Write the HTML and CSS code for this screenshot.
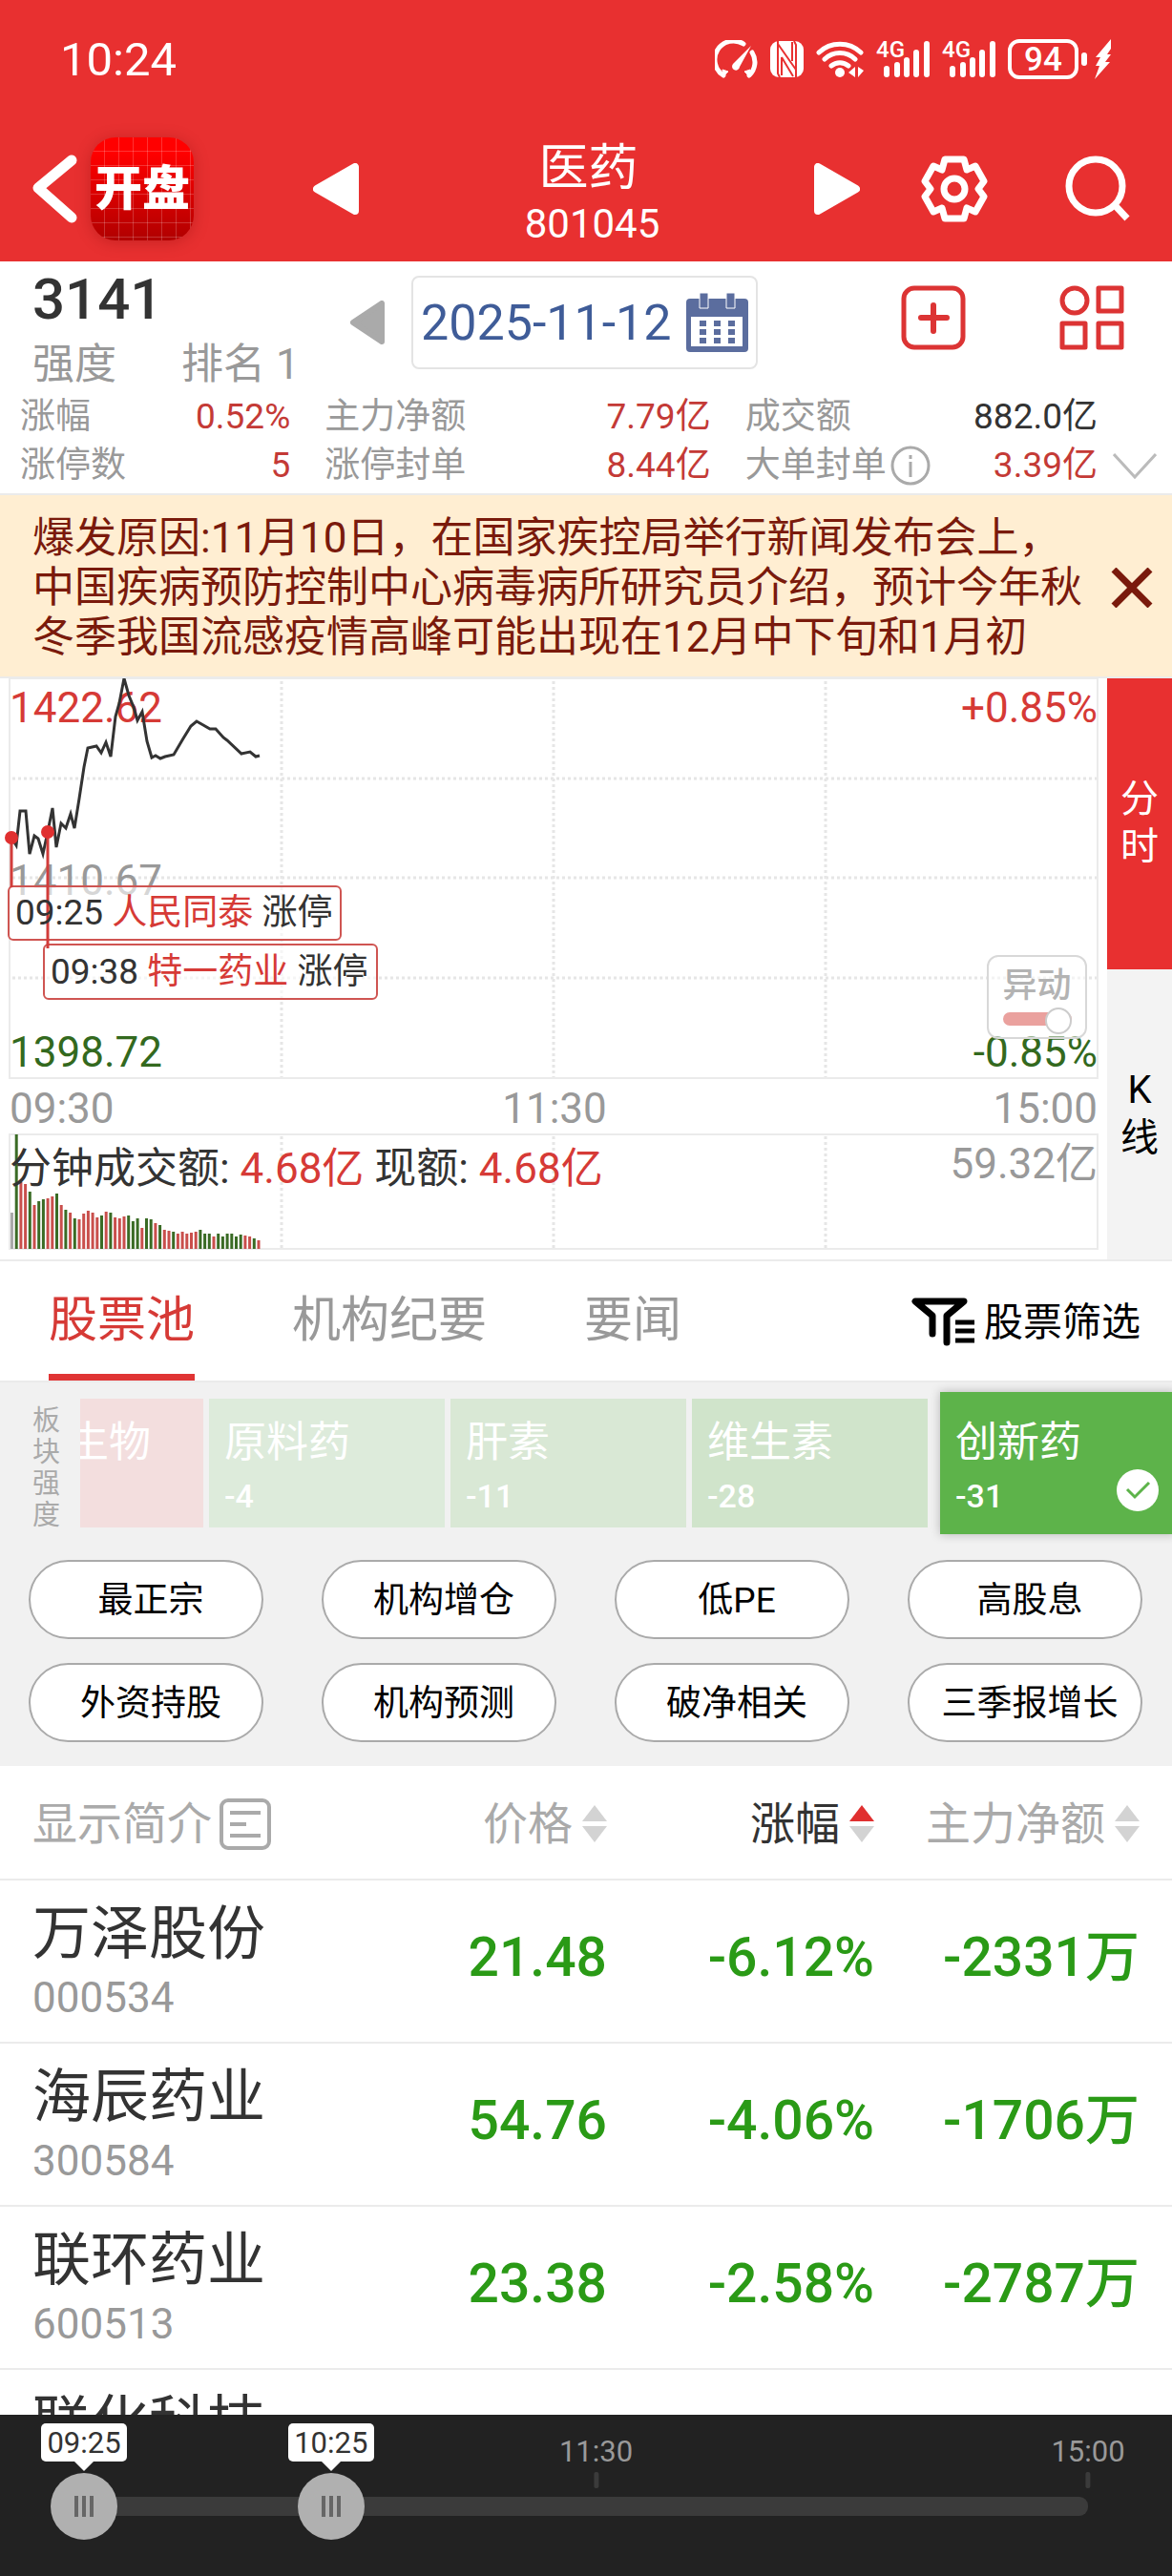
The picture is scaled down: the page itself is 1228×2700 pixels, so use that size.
FILE: index.html
```html
<!DOCTYPE html>
<html lang="zh-CN">
<head>
  <meta charset="UTF-8" />
  <meta name="viewport" content="width=device-width, initial-scale=1.0"/>
  <title>医药 801045</title>
  <link rel="stylesheet" href="styles.css">
</head>
<body>
  <div class="app">
    <header class="header">
      <div class="status-bar">
        <span class="clock">10:24</span>
        <div class="status-icons">
          <svg width="45" height="40" viewBox="0 0 45 40" fill="none" stroke="#fff" stroke-width="5">
            <path d="M9 37A19 19 0 0 1 30 4M39 13A19 19 0 0 1 36 37" stroke-linecap="round"/>
            <path d="M9 38l-1-7 6 2zM36 38l1-7-6 2z" fill="#fff" stroke-width="1"/>
            <path d="M38 6L26 28a4 4 0 1 1-7-3z" fill="#fff" stroke="none"/>
          </svg>
          <svg width="35" height="38" viewBox="0 0 35 38">
            <rect width="35" height="38" rx="9" fill="#fff"/>
            <path d="M8 0v34l2 4M27 38V4l-2-4M8 3l19 27M12 17l12 20M12 17v19M23 21V1" stroke="#e83030" stroke-width="2" fill="none"/>
          </svg>
          <svg width="50" height="40" viewBox="0 0 50 40" fill="none" stroke="#fff" stroke-width="5" stroke-linecap="round">
            <path d="M3 13a32 32 0 0 1 44 0M9 20a23 23 0 0 1 32 0M16 27a14 14 0 0 1 18 0"/>
            <circle cx="25" cy="34" r="5" fill="#fff" stroke="none"/>
            <path d="M41 28v11l-7-5zM44 28v11l6-7z" fill="#fff" stroke="none"/>
          </svg>
          <div class="signal">
            <span>4G</span>
            <svg width="56" height="40" viewBox="0 0 56 40" stroke="#fff" stroke-width="6" stroke-linecap="round">
              <path d="M11 30v6M22 26v10M32 21v15M42 13v23M53 4v32"/>
            </svg>
          </div>
          <div class="signal">
            <span>4G</span>
            <svg width="56" height="40" viewBox="0 0 56 40" stroke="#fff" stroke-width="6" stroke-linecap="round">
              <path d="M11 30v6M22 26v10M32 21v15M42 13v23M53 4v32"/>
            </svg>
          </div>
          <div class="power">
            <span class="battery">94</span>
            <span class="battery-nub"></span>
            <svg width="19" height="42" viewBox="0 0 19 42" fill="#fff">
              <path d="M18 0L2 19h5l-5 9h4L1 42l16-18h-5l6-8h-4l4-6z"/>
            </svg>
          </div>
        </div>
      </div>

      <nav class="nav">
        <div class="nav-left">
          <button class="icon-btn" aria-label="返回">
            <svg width="48" height="72" viewBox="0 0 48 72" fill="none" stroke="#fff" stroke-width="11" stroke-linecap="round" stroke-linejoin="round">
              <path d="M41 6L6 35l35 31"/>
            </svg>
          </button>
          <a class="logo" href="#">开盘</a>
          <button class="icon-btn prev" aria-label="上一个">
            <svg width="48" height="54" viewBox="0 0 48 54" fill="#fff" stroke="#fff" stroke-width="8" stroke-linejoin="round">
              <path d="M44 4v46L4 27z"/>
            </svg>
          </button>
        </div>
        <div class="nav-title">
          <h1>医药</h1>
          <span>801045</span>
        </div>
        <div class="nav-right">
          <button class="icon-btn" aria-label="下一个">
            <svg width="48" height="54" viewBox="0 0 48 54" fill="#fff" stroke="#fff" stroke-width="8" stroke-linejoin="round">
              <path d="M4 4v46l40-23z"/>
            </svg>
          </button>
          <button class="icon-btn" aria-label="设置">
            <svg width="70" height="72" viewBox="-35 -36 70 72" fill="none" stroke="#fff" stroke-width="7" stroke-linejoin="round">
              <path d="M-10-31H10L13-20 22-24 31-8 25 0 31 8 22 24 13 20 10 31H-10L-13 20-22 24-31 8-25 0-31-8-22-24-13-20z"/>
              <circle r="11"/>
            </svg>
          </button>
          <button class="icon-btn search" aria-label="搜索">
            <svg width="68" height="70" viewBox="0 0 68 70" fill="none" stroke="#fff" stroke-width="7">
              <circle cx="32" cy="32" r="28"/>
              <path d="M52 52l13 14"/>
            </svg>
          </button>
        </div>
      </nav>
    </header>

    <section class="info">
      <div class="info-top">
        <div class="score">
          <strong>3141</strong>
          <div class="score-sub"><span>强度</span><span>排名 1</span></div>
        </div>
        <button class="icon-btn day-prev" aria-label="前一天">
          <svg width="36" height="46" viewBox="0 0 36 46" fill="#aaa" stroke="#aaa" stroke-width="6" stroke-linejoin="round">
            <path d="M33 3v40L3 23z"/>
          </svg>
        </button>
        <button class="date-box">
          <span>2025-11-12</span>
          <svg width="65" height="62" viewBox="0 0 65 62" fill="#5b6d9e">
            <rect y="6" width="65" height="56" rx="4"/>
            <rect x="5" y="25" width="54" height="31" fill="#fff"/>
            <path d="M14 0h9v16h-9zM42 0h9v16h-9z" stroke="#fff" stroke-width="1"/>
            <path d="M14 29h7v6h-7zM29 29h7v6h-7zM44 29h7v6h-7zM14 38h7v6h-7zM29 38h7v6h-7zM44 38h7v6h-7zM14 47h7v6h-7zM29 47h7v6h-7zM44 47h7v6h-7z"/>
          </svg>
        </button>
        <div class="info-actions">
          <button class="icon-btn" aria-label="添加">
            <svg width="68" height="68" viewBox="0 0 68 68" fill="none" stroke="#dc3434" stroke-width="5">
              <rect x="3" y="3" width="62" height="62" rx="11"/>
              <path d="M34 21v27M21 34h27" stroke-width="6" stroke-linecap="round"/>
            </svg>
          </button>
          <button class="icon-btn" aria-label="更多">
            <svg width="68" height="68" viewBox="0 0 68 68" fill="none" stroke="#dc3434" stroke-width="5" stroke-linejoin="round">
              <circle cx="16" cy="16" r="13"/>
              <path d="M41 3h24v24H41zM3 40h24v25H3zM41 40h24v25H41z"/>
            </svg>
          </button>
        </div>
      </div>
      <div class="metrics">
        <dl>
          <div><dt>涨幅</dt><dd>0.52%</dd></div>
          <div><dt>主力净额</dt><dd>7.79亿</dd></div>
          <div><dt>成交额</dt><dd class="dark">882.0亿</dd></div>
          <div><dt>涨停数</dt><dd>5</dd></div>
          <div><dt>涨停封单</dt><dd>8.44亿</dd></div>
          <div>
            <dt>大单封单
              <svg width="42" height="42" viewBox="0 0 42 42" fill="none" stroke="#aaa" stroke-width="3">
                <circle cx="21" cy="21" r="19"/>
                <path d="M21 17v16M21 10v4"/>
              </svg>
            </dt>
            <dd>3.39亿</dd>
          </div>
        </dl>
        <button class="icon-btn expand" aria-label="展开">
          <svg width="46" height="30" viewBox="0 0 46 30" fill="none" stroke="#bbb" stroke-width="3">
            <path d="M1 3l22 24L45 3"/>
          </svg>
        </button>
      </div>
    </section>

    <section class="notice">
      <p>爆发原因:11月10日，在国家疾控局举行新闻发布会上，<br>中国疾病预防控制中心病毒病所研究员介绍，预计今年秋<br>冬季我国流感疫情高峰可能出现在12月中下旬和1月初</p>
      <button class="icon-btn" aria-label="关闭">
        <svg width="44" height="42" viewBox="0 0 44 42" stroke="#7a1a0c" stroke-width="7">
          <path d="M3 2l38 38M41 2L3 40"/>
        </svg>
      </button>
    </section>

    <section class="quote">
      <div class="chart">
        <svg class="chart-svg" viewBox="0 0 1160 609">
          <g class="grid">
            <path d="M13 105H1149M13 209H1149M13 314H1149M295 3V418M580 3V418M865 3V418M295 480V597M580 480V597M865 480V597"/>
          </g>
          <g class="frame">
            <rect x="10" y="0" width="1140" height="419"/>
            <rect x="10" y="478" width="1140" height="120"/>
          </g>
          <g id="volumeBars"></g>
          <text class="axis up" x="10" y="46">1422.62</text>
          <text class="axis" x="10" y="227">1410.67</text>
          <text class="axis down" x="10" y="407">1398.72</text>
          <text class="axis up" x="1150" y="46" text-anchor="end">+0.85%</text>
          <text class="axis down" x="1150" y="407" text-anchor="end">-0.85%</text>
          <text class="axis" x="10" y="466">09:30</text>
          <text class="axis" x="581" y="466" text-anchor="middle">11:30</text>
          <text class="axis" x="1150" y="466" text-anchor="end">15:00</text>
          <text class="axis dark" x="10" y="529">分钟成交额: <tspan class="up">4.68亿</tspan> 现额: <tspan class="up">4.68亿</tspan></text>
          <text class="axis" x="1150" y="524" text-anchor="end">59.32亿</text>
          <polyline class="price-line" points="12,167 17,175 21,139 27,139 31,184 36,165 40,168 45,184 50,161 55,136 59,177 64,152 69,157 74,142 78,157 83,126 88,93 92,73 101,71 106,78 111,67 116,82 121,40 125,26 130,0 135,18 140,30 144,44 149,35 154,66 159,83 163,81 168,84 173,82 182,80 192,63 200,50 206,45 213,49 220,53 226,53 234,62 238,65 253,79 262,77 268,82 272,81"/>
          <g class="event">
            <rect x="9" y="218" width="348" height="56" rx="5"/>
            <rect x="46" y="279" width="349" height="57" rx="5"/>
            <path d="M12 167v52M50 161v122"/>
            <circle cx="12" cy="167" r="7"/>
            <circle cx="50" cy="161" r="7"/>
            <text x="16" y="258">09:25 <tspan class="up">人民同泰</tspan> 涨停</text>
            <text x="53" y="320">09:38 <tspan class="up">特一药业</tspan> 涨停</text>
          </g>
        </svg>
        <label class="move-toggle">
          <span>异动</span>
          <input type="checkbox" checked>
        </label>
      </div>
      <div class="side-tabs">
        <button class="active">分<br>时</button>
        <button>K<br>线</button>
      </div>
    </section>

    <nav class="tabs">
      <a class="active" href="#">股票池</a>
      <a href="#">机构纪要</a>
      <a href="#">要闻</a>
      <button class="filter-btn">
        <svg width="66" height="52" viewBox="0 0 66 52" fill="none" stroke="#000" stroke-width="7" stroke-linecap="round" stroke-linejoin="round">
          <path d="M22 38V19L4 4h51L37 19v28"/>
          <path d="M46 26h20M46 35h20M46 45h20" stroke-width="5" stroke-linecap="butt"/>
        </svg>
        <span>股票筛选</span>
      </button>
    </nav>

    <section class="sectors">
      <div class="sector-row">
        <div class="sector-label">板块强度</div>
        <div class="sector-strip">
          <button class="tile rise">合成生物</button>
          <button class="tile fall-1">原料药<b>-4</b></button>
          <button class="tile fall-2">肝素<b>-11</b></button>
          <button class="tile fall-3">维生素<b>-28</b></button>
          <button class="tile selected">创新药<b>-31</b>
            <svg width="44" height="44" viewBox="0 0 44 44">
              <circle cx="22" cy="22" r="22" fill="#fff"/>
              <path d="M11 21l8 8 15-15" fill="none" stroke="#5db34a" stroke-width="3"/>
            </svg>
          </button>
        </div>
      </div>
      <div class="pills">
        <button>最正宗</button>
        <button>机构增仓</button>
        <button>低PE</button>
        <button>高股息</button>
        <button>外资持股</button>
        <button>机构预测</button>
        <button>破净相关</button>
        <button>三季报增长</button>
      </div>
    </section>

    <section class="stocks">
      <table>
        <colgroup><col><col class="col-num"><col class="col-num"><col class="col-last"></colgroup>
        <thead>
          <tr>
            <th>
              <button>显示简介
                <svg width="54" height="54" viewBox="0 0 54 54" fill="none" stroke="#aaa" stroke-width="4">
                  <rect x="2" y="2" width="50" height="50" rx="7"/>
                  <path d="M11 15h32M11 27h17M11 39h32"/>
                </svg>
              </button>
            </th>
            <th><button>价格<i class="sort"></i></button></th>
            <th class="sorted"><button>涨幅<i class="sort"></i></button></th>
            <th><button>主力净额<i class="sort"></i></button></th>
          </tr>
        </thead>
        <tbody>
          <tr><td>万泽股份<small>000534</small></td><td>21.48</td><td>-6.12%</td><td>-2331万</td></tr>
          <tr><td>海辰药业<small>300584</small></td><td>54.76</td><td>-4.06%</td><td>-1706万</td></tr>
          <tr><td>联环药业<small>600513</small></td><td>23.38</td><td>-2.58%</td><td>-2787万</td></tr>
          <tr><td>联化科技</td><td></td><td></td><td></td></tr>
        </tbody>
      </table>
    </section>

    <footer class="timeline">
      <div class="timeline-inner">
        <span class="tip" style="left: 0%">09:25</span>
        <span class="tip" style="left: 24.6%">10:25</span>
        <span class="tick" style="left: 51%">11:30</span>
        <span class="tick" style="left: 100%">15:00</span>
        <div class="track"></div>
        <input type="range" min="0" max="1000" value="0" aria-label="开始时间">
        <input type="range" min="0" max="1000" value="246" aria-label="结束时间">
      </div>
    </footer>
  </div>

  <script src="script.js"></script>
</body>
</html>
```
FILE: styles.css
```css
:root {
  --red: #e83030;
  --up: #d63a36;
  --down: #33691e;
  --green: #2a9a16;
  --text: #333;
  --muted: #999;
  --line: #ebebeb;
}

* {
  box-sizing: border-box;
}

body {
  margin: 0;
  font-family: Roboto, "Noto Sans CJK SC", sans-serif;
  color: var(--text);
  background: #fff;
}

button {
  font: inherit;
  color: inherit;
  background: none;
  border: 0;
  padding: 0;
  cursor: pointer;
}

a {
  color: inherit;
  text-decoration: none;
}

svg {
  display: block;
  flex: none;
}

.app {
  height: 100vh;
  display: flex;
  flex-direction: column;
  overflow: hidden;
}

.app > * {
  flex: none;
}

.icon-btn {
  display: flex;
  align-items: center;
}

/* header */
.header {
  background: var(--red);
  color: #fff;
}

.status-bar {
  height: 122px;
  padding: 2px 63px 0;
  display: flex;
  align-items: center;
  justify-content: space-between;
}

.clock {
  font-size: 49px;
}

.status-icons {
  display: flex;
  align-items: center;
  gap: 13px;
}

.signal {
  position: relative;
}

.signal span {
  position: absolute;
  left: 0;
  top: -2px;
  font-size: 24px;
  line-height: 24px;
  font-weight: 500;
}

.power {
  display: flex;
  align-items: center;
  gap: 3px;
}

.battery {
  width: 74px;
  height: 42px;
  border: 4px solid #fff;
  border-radius: 12px;
  font-size: 35px;
  font-weight: 500;
  line-height: 35px;
  text-align: center;
}

.battery-nub {
  width: 6px;
  height: 14px;
  margin-right: 4px;
  border-radius: 3px;
  background: #fff;
}

.nav {
  height: 152px;
  display: grid;
  grid-template-columns: 376px 1fr 371px;
  align-items: center;
}

.nav-left {
  display: flex;
  align-items: center;
  gap: 13px;
  padding-left: 34px;
}

.prev {
  margin-left: auto;
}

.logo {
  width: 108px;
  height: 108px;
  border-radius: 26px;
  background:
    repeating-linear-gradient(90deg, transparent 0 14px, rgba(255, 255, 255, 0.2) 14px 15px),
    repeating-linear-gradient(transparent 0 14px, rgba(255, 255, 255, 0.2) 14px 15px),
    linear-gradient(#f00 15%, #b00000);
  box-shadow: 0 2px 16px rgba(120, 0, 0, 0.3);
  font-size: 50px;
  font-weight: 900;
  line-height: 108px;
  text-indent: 4px;
}

.nav-title {
  padding-top: 10px;
  text-align: center;
}

.nav-title h1 {
  margin: 0;
  font-size: 52px;
  font-weight: 400;
  line-height: 64px;
}

.nav-title span {
  display: block;
  padding-left: 8px;
  font-size: 42px;
  line-height: 52px;
}

.nav-right {
  display: flex;
  align-items: center;
  gap: 64px;
  margin-left: -4px;
  padding-right: 44px;
}

.search {
  margin-left: auto;
}

/* summary */
.info-top {
  height: 135px;
  display: flex;
  align-items: flex-start;
  padding: 8px 50px 0 34px;
}

.score {
  width: 333px;
}

.score strong {
  display: block;
  font-size: 60px;
  font-weight: 500;
  line-height: 64px;
}

.score-sub {
  display: flex;
  gap: 68px;
  font-size: 44px;
  line-height: 72px;
  color: var(--muted);
}

.day-prev,
.date-box {
  height: 98px;
  margin-top: 7px;
}

.date-box {
  display: flex;
  align-items: center;
  justify-content: space-between;
  width: 363px;
  margin-left: 28px;
  padding: 0 8px;
  border: 2px solid #e4e4e4;
  border-radius: 8px;
  font-size: 52px;
  color: #3f5c98;
}

.info-actions {
  display: flex;
  gap: 98px;
  margin-left: auto;
  padding-top: 17px;
}

.metrics {
  display: flex;
  padding: 2px 0 4px 21px;
  font-size: 37px;
  line-height: 51px;
}

.metrics dl {
  flex: 1;
  display: grid;
  grid-template-columns: 283fr 404fr 369fr;
  column-gap: 36px;
  margin: 0;
}

.metrics dl div {
  display: flex;
  justify-content: space-between;
}

.metrics dt {
  display: flex;
  align-items: center;
  gap: 4px;
  color: var(--muted);
}

.metrics dd {
  margin: 0;
  color: #c43a36;
}

.metrics .dark {
  color: var(--text);
}

.expand {
  width: 78px;
  height: 51px;
  justify-content: center;
  align-self: flex-end;
}

/* notice */
.notice {
  display: flex;
  align-items: center;
  justify-content: space-between;
  padding: 19px 20px 15px 34px;
  background: #ffeed2;
  border-top: 2px solid var(--line);
  border-bottom: 2px solid var(--line);
  color: #7a1a0c;
}

.notice p {
  margin: 0;
  font-size: 44px;
  line-height: 52px;
  white-space: nowrap;
}

/* chart */
.quote {
  display: grid;
  grid-template-columns: 1fr 68px;
}

.chart {
  position: relative;
}

.chart-svg {
  width: 100%;
}

.grid path {
  fill: none;
  stroke: #e6e6e6;
  stroke-width: 3;
  stroke-dasharray: 3 3;
}

.frame rect {
  fill: none;
  stroke: var(--line);
  stroke-width: 2;
}

.axis {
  font-size: 44px;
  fill: var(--muted);
}

.axis.dark {
  fill: var(--text);
}

.chart-svg .up {
  fill: var(--up);
}

.chart-svg .down {
  fill: var(--down);
}

.bar-up {
  fill: #c94f4c;
}

.bar-down {
  fill: #3a6b25;
}

.bar-flat {
  fill: #aaa;
}

.price-line {
  fill: none;
  stroke: #333;
  stroke-width: 3;
}

.event rect {
  fill: rgba(255, 255, 255, 0.6);
  stroke: #cf5552;
  stroke-width: 2;
}

.event path {
  stroke: #d23c3a;
  stroke-width: 3;
}

.event circle {
  fill: #e03030;
}

.event text {
  font-size: 37px;
  fill: var(--text);
}

.move-toggle {
  position: absolute;
  right: 21px;
  top: 290px;
  width: 105px;
  height: 88px;
  padding-top: 2px;
  display: flex;
  flex-direction: column;
  align-items: center;
  border: 2px solid #d8d8d8;
  border-radius: 12px;
  background: rgba(255, 255, 255, 0.5);
  font-size: 36px;
  font-weight: 500;
  line-height: 56px;
  color: #b3b3b3;
}

.move-toggle input {
  appearance: none;
  position: relative;
  width: 72px;
  height: 14px;
  margin: 0;
  border-radius: 7px;
  background: #eaa19e;
}

.move-toggle input::after {
  content: "";
  position: absolute;
  right: 0;
  top: -5px;
  width: 24px;
  height: 24px;
  border: 2px solid #ccc;
  border-radius: 50%;
  background: #fff;
}

.side-tabs {
  display: grid;
  grid-template-rows: 1fr 1fr;
  font-size: 40px;
  line-height: 50px;
  color: #000;
}

.side-tabs button {
  background: #f3f3f3;
}

.side-tabs .active {
  background: var(--red);
  color: #fff;
}

/* tabs */
.tabs {
  display: flex;
  gap: 102px;
  height: 129px;
  padding: 0 33px 0 51px;
  border-top: 2px solid var(--line);
  border-bottom: 2px solid var(--line);
  font-size: 51px;
  line-height: 124px;
  color: var(--muted);
}

.tabs a.active {
  color: var(--up);
  border-bottom: 7px solid #e03434;
}

.filter-btn {
  display: flex;
  align-items: center;
  gap: 10px;
  margin-left: auto;
  padding-top: 2px;
  font-size: 41px;
  color: #000;
}

/* sectors */
.sectors {
  background: #f1f1f1;
}

.sector-row {
  display: flex;
  align-items: center;
}

.sector-label {
  width: 84px;
  padding: 10px 20px 0 34px;
  font-size: 29px;
  line-height: 33px;
  color: #aaa;
}

.sector-strip {
  flex: 1;
  display: flex;
  align-items: center;
  gap: 6px;
  overflow: hidden;
  padding: 10px 0;
}

.tile {
  flex: none;
  width: 247px;
  height: 135px;
  padding: 18px 16px 5px;
  display: flex;
  flex-direction: column;
  align-items: flex-start;
  font-size: 44px;
  line-height: 56px;
  color: #fff;
}

.tile b {
  font-size: 34px;
  font-weight: 500;
}

.tile.rise {
  background: #f3dede;
  margin-left: -118px;
}

.tile.fall-1 {
  background: #ddebdb;
}

.tile.fall-2 {
  background: #d9e8d5;
}

.tile.fall-3 {
  background: #d0e4cb;
}

.tile.selected {
  position: relative;
  height: 149px;
  margin-left: 7px;
  padding-top: 25px;
  background: #5db34a;
  box-shadow: 0 0 10px rgba(0, 0, 0, 0.25);
}

.tile svg {
  position: absolute;
  left: 185px;
  bottom: 24px;
}

.pills {
  display: grid;
  grid-template-columns: repeat(4, 1fr);
  gap: 25px 61px;
  padding: 17px 31px 25px 30px;
}

.pills button {
  height: 83px;
  padding: 0 0 6px 10px;
  border: 2px solid #aaa;
  border-radius: 42px;
  background: #fff;
  font-size: 37px;
  color: #000;
  white-space: nowrap;
}

/* stocks */
.app > .stocks {
  flex: 1;
  min-height: 0;
  overflow: hidden;
}

.stocks table {
  width: 100%;
  table-layout: fixed;
  border-collapse: separate;
  border-spacing: 0;
}

.col-num {
  width: 280px;
}

.col-last {
  width: 312px;
}

.stocks th,
.stocks td {
  padding: 0;
  border-bottom: 2px solid var(--line);
  text-align: right;
  white-space: nowrap;
}

.stocks th:first-child,
.stocks td:first-child {
  padding-left: 34px;
  text-align: left;
}

.stocks th:last-child,
.stocks td:last-child {
  padding-right: 34px;
}

.stocks th {
  height: 120px;
  font-size: 47px;
  font-weight: 400;
  line-height: 60px;
  color: #aaa;
}

.stocks th button {
  display: inline-flex;
  align-items: center;
  gap: 8px;
  vertical-align: middle;
}

.stocks th.sorted {
  color: var(--text);
}

.sort {
  display: grid;
  gap: 5px;
  margin-left: 2px;
}

.sort::before,
.sort::after {
  content: "";
  border: 13px solid transparent;
  border-top-width: 0;
  border-bottom: 17px solid #d3d3d3;
}

.sort::after {
  border-top: 17px solid #d3d3d3;
  border-bottom-width: 0;
}

.sorted .sort::before {
  border-bottom-color: #e03030;
}

.stocks td {
  height: 171px;
  padding-bottom: 8px;
  font-size: 57px;
  font-weight: 500;
  line-height: 80px;
  color: var(--green);
}

.stocks td:first-child {
  padding-top: 22px;
  padding-bottom: 0;
  font-size: 61px;
  font-weight: 400;
  line-height: 68px;
  color: var(--text);
  vertical-align: top;
}

.stocks small {
  display: block;
  font-size: 44px;
  line-height: 66px;
  color: var(--muted);
}

/* timeline */
.timeline {
  height: 169px;
  padding: 0 88px;
  background: #222;
}

.timeline-inner {
  position: relative;
  height: 100%;
  font-size: 31px;
}

.tip,
.tick {
  position: absolute;
  transform: translateX(-50%);
  line-height: 42px;
}

.tip {
  top: 9px;
  width: 90px;
  height: 40px;
  border-radius: 5px;
  background: #fff;
  text-align: center;
}

.tip::after {
  content: "";
  position: absolute;
  left: 34px;
  top: 39px;
  border: 11px solid transparent;
  border-top-color: #fff;
  border-bottom: 0;
}

.tick {
  top: 18px;
  color: var(--muted);
}

.tick::after {
  content: "";
  display: block;
  width: 5px;
  height: 17px;
  margin: 0 auto;
  border-radius: 2px;
  background: #3b3b3b;
}

.track {
  position: absolute;
  top: 86px;
  width: 100%;
  height: 20px;
  border-radius: 9px;
  background: #3b3b3b;
}

.timeline input {
  appearance: none;
  position: absolute;
  left: -35px;
  top: 61px;
  width: calc(100% + 70px);
  height: 70px;
  margin: 0;
  background: none;
  pointer-events: none;
}

.timeline input::-webkit-slider-thumb {
  appearance: none;
  width: 70px;
  height: 70px;
  border-radius: 50%;
  background:
    linear-gradient(#666, #666) 25px 50% / 4px 22px no-repeat,
    linear-gradient(#666, #666) 33px 50% / 4px 22px no-repeat,
    linear-gradient(#666, #666) 41px 50% / 4px 22px no-repeat,
    #b0b0b0;
  pointer-events: auto;
}
```
FILE: script.js
```js
// per-minute turnover: bar height and direction (r = up, g = down, n = flat)
const heights = [38, 120, 70, 68, 60, 46, 50, 52, 53, 55, 58, 46, 41, 38, 32, 31, 37, 40, 38, 33,
  35, 39, 38, 33, 32, 34, 35, 29, 32, 22, 32, 31, 27, 25, 20, 19, 18, 16, 18, 16,
  17, 18, 20, 16, 16, 13, 16, 13, 16, 16, 13, 15, 14, 13, 11, 9];
const colors = "ngrrgrggrrgrgrgrrrrrgrgrrrgggrggrgrrgrrrrrgggrggggggrrgr";
const classes = { r: "bar-up", g: "bar-down", n: "bar-flat" };

const group = document.getElementById("volumeBars");
heights.forEach((h, i) => {
  const bar = document.createElementNS("http://www.w3.org/2000/svg", "rect");
  bar.setAttribute("x", 11 + i * 4.7);
  bar.setAttribute("y", 598 - h);
  bar.setAttribute("width", 3);
  bar.setAttribute("height", h);
  bar.setAttribute("class", classes[colors[i]]);
  group.appendChild(bar);
});
```
